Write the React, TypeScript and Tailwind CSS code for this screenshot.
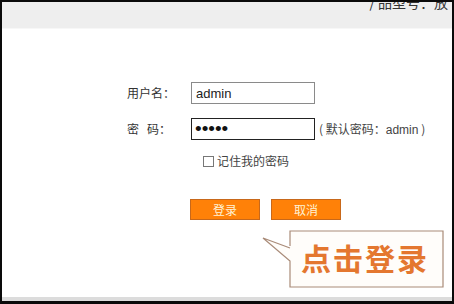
import React from "react";

const cjk = { fontFamily: '"Noto Sans CJK SC", "Liberation Sans", sans-serif' };
const latin = { fontFamily: '"Liberation Sans", "Noto Sans CJK SC", sans-serif' };

function Callout() {
  return (
    <div className="absolute left-[258px] top-[225px] w-[184px] h-[61px]">
      <svg width="184" height="61" className="absolute left-0 top-0">
        <path
          d="M30 19 L30 4 L183 4 L183 60 L30 60 L30 34 L3 11 L30 21"
          fill="#fffdfa"
          stroke="#a98b78"
          strokeWidth="1.2"
        />
      </svg>
      <div
        className="absolute left-[41px] top-[10px] text-[30px] font-bold leading-[40px] tracking-[2px] text-[#e4772f]"
        style={cjk}
      >
        点击登录
      </div>
    </div>
  );
}

export default function App() {
  return (
    <div className="w-[454px] h-[304px] bg-[#0a0a0a] pt-[2px] pl-[2px] pr-[2px] pb-[3px]">
      <div className="relative w-full h-full bg-white flex flex-col overflow-hidden">
        <div className="h-[26px] bg-[#eeeeee] relative overflow-hidden">
          <div
            className="absolute right-[4px] top-[-9px] text-[14px] leading-[18px] text-[#333]"
            style={cjk}
          >
            / 品型号：放
          </div>
        </div>
        <div className="h-[1px] bg-[#f7f7f7]" />

        <div className="flex-1 pt-[53px] pl-[125px] text-[12px] text-[#333]" style={cjk}>
          <div className="flex items-center h-[22px]">
            <span className="w-[64px]">用户名：</span>
            <input
              readOnly
              value="admin"
              className="w-[124px] h-[22px] border border-[#8a8a8a] px-[4px] text-[13px] text-[#222] outline-none"
              style={latin}
            />
          </div>
          <div className="flex items-center h-[22px] mt-[14px]">
            <span className="w-[64px]">密&nbsp;&nbsp;&nbsp;码：</span>
            <input
              readOnly
              type="password"
              value="admin"
              className="w-[124px] h-[22px] border border-[#222] px-[3px] text-[19px] leading-[20px] text-[#111] outline-none"
              style={latin}
            />
            <span className="ml-[4px] text-[12px] text-[#444]">
              ( 默认密码：<span style={latin}>admin</span> )
            </span>
          </div>
          <div className="flex items-center mt-[14px] ml-[76px] h-[14px]">
            <span className="w-[11px] h-[11px] border border-[#777] bg-white" />
            <span className="ml-[3px] text-[12px] text-[#444]">记住我的密码</span>
          </div>
          <div className="flex gap-[11px] mt-[31px] ml-[63px]">
            <button className="w-[70px] h-[21px] bg-[#ff8108] border border-[#c8681a] text-[12px] text-[#fff3d6] leading-none">
              登录
            </button>
            <button className="w-[70px] h-[21px] bg-[#ff8108] border border-[#c8681a] text-[12px] text-[#fff3d6] leading-none">
              取消
            </button>
          </div>
        </div>

        <div className="h-[4px] bg-[#dcdcdc]" />
        <Callout />
      </div>
    </div>
  );
}
